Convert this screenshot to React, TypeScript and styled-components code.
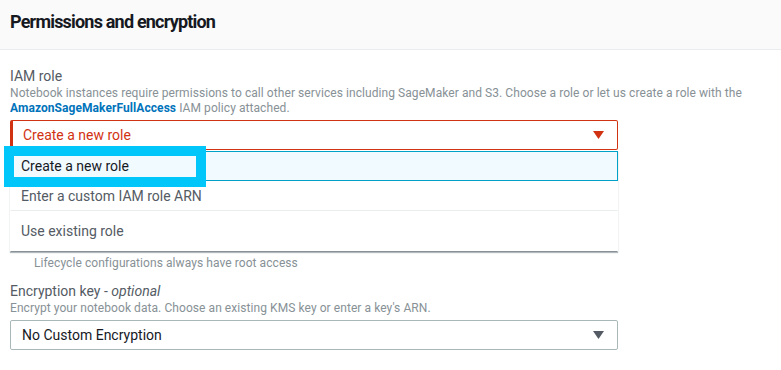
import React from "react";
import styled, { createGlobalStyle } from "styled-components";

const GlobalStyle = createGlobalStyle`
  body {
    margin: 0;
    background: #ffffff;
    font-family: Roboto, "Liberation Sans", sans-serif;
    color: #16191f;
  }
`;

const Panel = styled.section`
  width: 781px;
  height: 370px;
  overflow: hidden;
  background: #ffffff;
`;

const Header = styled.header`
  height: 50px;
  box-sizing: border-box;
  padding: 11px 10px 0;
  background: #fafafa;
  border-bottom: 1px solid #eaeded;
`;

const Title = styled.h2`
  margin: 0;
  font-size: 18px;
  line-height: 22px;
  font-weight: 700;
  letter-spacing: -0.8px;
  color: #16191f;
`;

const Body = styled.div`
  padding: 16px 10px 0;
`;

const Field = styled.div<{ $gap?: number }>`
  position: relative;
  margin-top: ${(p) => p.$gap ?? 0}px;
`;

const Label = styled.div`
  font-size: 14px;
  line-height: 20px;
  color: #545b64;

  em {
    font-style: italic;
  }
`;

const Description = styled.div`
  font-size: 12px;
  line-height: 15px;
  letter-spacing: 0.07px;
  color: #879196;

  a {
    color: #0073bb;
    font-weight: 700;
    text-decoration: none;
  }
`;

const Select = styled.div<{ $invalid?: boolean }>`
  margin-top: 4px;
  width: 608px;
  height: 30px;
  box-sizing: border-box;
  display: flex;
  align-items: center;
  justify-content: space-between;
  padding: 0 13px 0 ${(p) => (p.$invalid ? 10 : 11)}px;
  border: 1px solid ${(p) => (p.$invalid ? "#d13212" : "#aab7b8")};
  border-left-width: ${(p) => (p.$invalid ? 3 : 1)}px;
  border-radius: 2px;
  font-size: 14px;
  color: ${(p) => (p.$invalid ? "#d13212" : "#16191f")};
`;

const Caret = ({ color }: { color: string }) => (
  <svg width="11" height="8" viewBox="0 0 11 8">
    <polygon points="0,0 11,0 5.5,8" fill={color} />
  </svg>
);

// open dropdown list that lies over the fields below it
const Menu = styled.ul`
  position: absolute;
  left: 0;
  top: 85px;
  z-index: 2;
  width: 608px;
  box-sizing: border-box;
  margin: 0;
  padding: 0;
  list-style: none;
  background: #ffffff;
  border: 1px solid #eaeded;
  border-top: none;
  border-bottom: 1px solid #879196;
  box-shadow: 0 1px 1px rgba(0, 28, 36, 0.3);
`;

const Option = styled.li<{ $active?: boolean; $tall?: boolean }>`
  height: ${(p) => (p.$tall ? 40 : 30)}px;
  box-sizing: border-box;
  display: flex;
  align-items: ${(p) => (p.$tall ? "flex-start" : "center")};
  padding: ${(p) => (p.$tall ? "9px" : "0")} 10px 0;
  font-size: 14px;
  line-height: 20px;
  color: ${(p) => (p.$active ? "#16191f" : "#545b64")};
  background: ${(p) => (p.$active ? "#f1faff" : "#ffffff")};
  border: 1px solid ${(p) => (p.$active ? "#00a1c9" : "transparent")};
  border-bottom-color: ${(p) => (p.$active ? "#00a1c9" : "#eaeded")};
  margin: 0 -1px;

  &:last-child {
    border-bottom-color: transparent;
  }
`;

// annotation box drawn on top of the first option
const Highlight = styled.div`
  position: absolute;
  left: -6px;
  top: 80px;
  z-index: 3;
  width: 202px;
  height: 41px;
  box-sizing: border-box;
  border: 10px solid #00c6fa;
  pointer-events: none;
`;

const RadioRow = styled.div`
  display: flex;
  align-items: center;
  gap: 8px;
  font-size: 14px;
  line-height: 20px;
  color: #16191f;
  margin-top: 4px;
`;

const RadioDot = styled.span`
  width: 14px;
  height: 14px;
  border-radius: 50%;
  border: 2px solid #687078;
  box-sizing: border-box;
  flex: none;
`;

const Indented = styled(Description)`
  padding-left: 24px;
  margin-top: 2px;
`;

export default function App() {
  return (
    <>
      <GlobalStyle />
      <Panel>
        <Header>
          <Title>Permissions and encryption</Title>
        </Header>
        <Body>
          <Field>
            <Label>IAM role</Label>
            <Description>
              Notebook instances require permissions to call other services including SageMaker and S3. Choose a role
              or let us create a role with the <a href="#">AmazonSageMakerFullAccess</a> IAM policy attached.
            </Description>
            <Select $invalid>
              <span>Create a new role</span>
              <Caret color="#d13212" />
            </Select>
            <Menu>
              <Option $active>Create a new role</Option>
              <Option>Enter a custom IAM role ARN</Option>
              <Option $tall>Use existing role</Option>
            </Menu>
            <Highlight />
          </Field>

          <Field $gap={36}>
            <Label>
              Root access - <em>optional</em>
            </Label>
            <RadioRow>
              <RadioDot />
              Enable - Give users root access to the notebook
            </RadioRow>
            <RadioRow>
              <RadioDot />
              Disable - Don't give users root access to the notebook
            </RadioRow>
            <Indented>Lifecycle configurations always have root access</Indented>
          </Field>

          <Field $gap={10}>
            <Label>
              Encryption key - <em>optional</em>
            </Label>
            <Description>
              Encrypt your notebook data. Choose an existing KMS key or enter a key's ARN.
            </Description>
            <Select>
              <span>No Custom Encryption</span>
              <Caret color="#545b64" />
            </Select>
          </Field>
        </Body>
      </Panel>
    </>
  );
}
